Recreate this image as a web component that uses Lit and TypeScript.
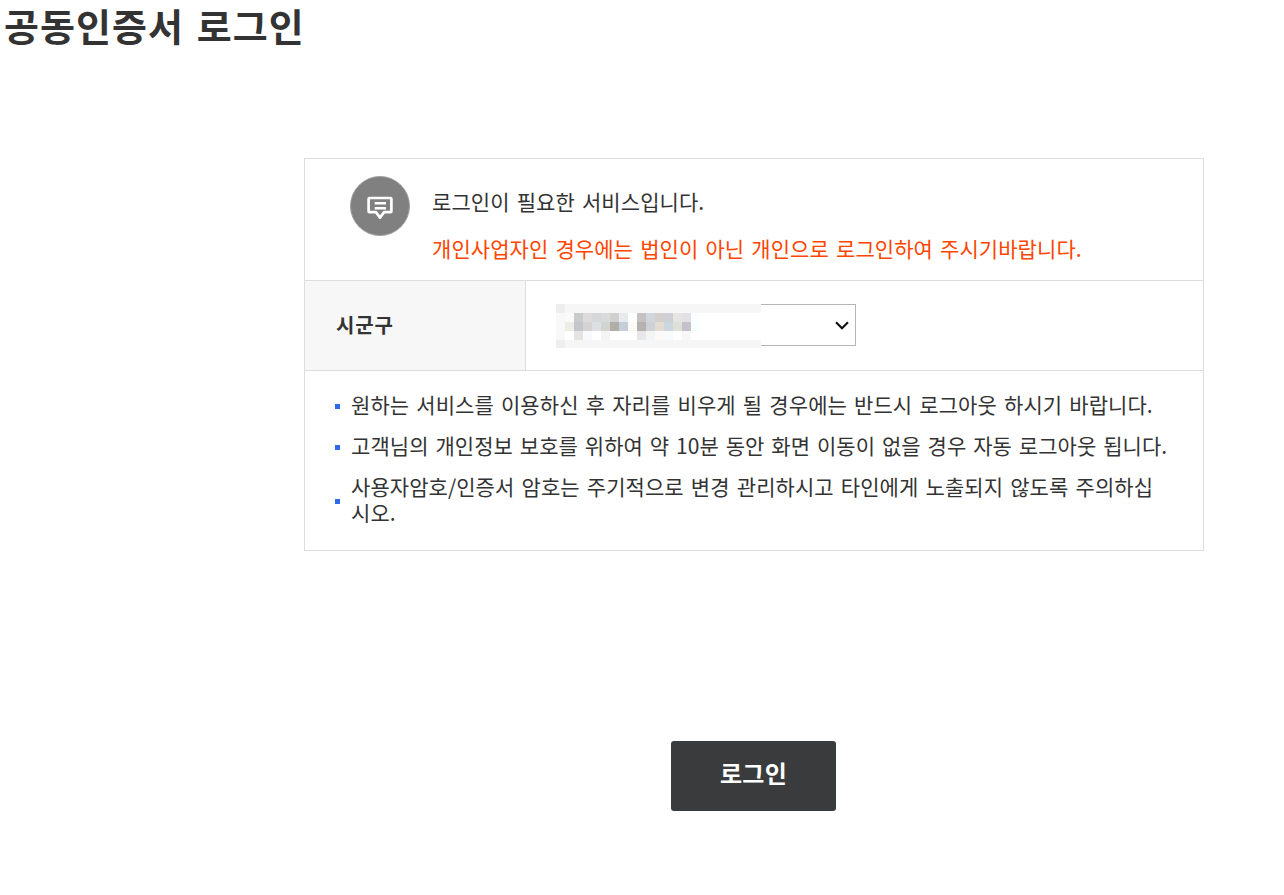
import { LitElement, html, css } from "lit";
import { customElement } from "lit/decorators.js";

const W = "#ffffff";
const top = "#f6f6f6";
const mosaic: string[][] = [
  ["#eeeeee", ...Array(22).fill(top)],
  ["#f8f8f8", "#fafafa", "#c9cbcb", "#dddbdb", "#d4d8d8", "#d9dbdb", "#d0d0d0", "#e8ebee", "#fefefe", "#c4c2c3", "#d2d5da", "#d2cfcd", "#cdd1d5", "#e5e6e3", "#e3e1e5", "#fbfefe", ...Array(7).fill(W)],
  ["#f8f8f8", "#eeece6", "#c3c6cb", "#d5d2d3", "#dde0e3", "#d3d3d0", "#b0ada6", "#c3ced6", "#fbfaf7", "#b5b3ae", "#cfd1d6", "#e2dcd2", "#cbd6de", "#e0e0da", "#c4c1cc", "#f8ffff", ...Array(7).fill(W)],
  ["#f8f8f8", W, "#e4e4e2", "#f7f9fb", W, "#f4f4f4", W, W, W, "#e8e6e9", "#f3f5f5", "#fcfaf8", "#f9fafc", W, "#f8f6f7", ...Array(8).fill(W)],
  ["#eeeeee", ...Array(22).fill(top)],
];

@customElement("app-root")
export class AppRoot extends LitElement {
  static styles = css`
    :host {
      display: block;
      font-family: "Noto Sans CJK KR", "Noto Sans", sans-serif;
      color: #333;
      background: #fff;
      min-height: 895px;
    }
    h1 {
      margin: 0;
      font-size: 38px;
      line-height: 50px;
      font-weight: 700;
      letter-spacing: 1.05px;
      word-spacing: 3px;
      padding-left: 4px;
      color: #333;
    }
    .wrap {
      margin: 108px 0 0 304px;
      width: 900px;
    }
    .box {
      border: 1px solid #ddd;
      box-sizing: border-box;
      width: 900px;
    }
    .head {
      display: flex;
      height: 122px;
      box-sizing: border-box;
      padding: 17px 0 0 45px;
      border-bottom: 1px solid #ddd;
    }
    .circle {
      width: 60px;
      height: 60px;
      flex: none;
    }
    .msgs {
      margin-left: 22px;
      font-size: 21px;
      letter-spacing: 0.06px;
      word-spacing: 2.4px;
      line-height: 30px;
      padding-top: 10px;
    }
    .msgs p { margin: 0; }
    .msgs .warn { color: #ff4500; margin-top: 17px; }
    .row {
      display: flex;
      height: 90px;
      border-bottom: 1px solid #ddd;
      box-sizing: border-box;
    }
    .label {
      width: 221px;
      box-sizing: border-box;
      background: #f7f7f7;
      border-right: 1px solid #ddd;
      padding: 0 0 2px 31px;
      font-size: 20px;
      letter-spacing: 0.9px;
      font-weight: 700;
      display: flex;
      align-items: center;
    }
    .field {
      padding: 23px 0 0 30px;
      position: relative;
    }
    select {
      display: block;
      appearance: none;
      width: 300px;
      height: 42px;
      box-sizing: border-box;
      border: 1px solid #b5b5b5;
      border-radius: 0;
      background: #fff;
      font-size: 18px;
    }
    .chev {
      position: absolute;
      left: 309px;
      top: 40px;
      width: 14px;
      height: 9px;
      pointer-events: none;
    }
    .mosaic {
      position: absolute;
      left: 30px;
      top: 23px;
      width: 205px;
      height: 44px;
      overflow: hidden;
      display: grid;
      grid-template-columns: repeat(23, 9px);
      grid-template-rows: repeat(5, 9px);
    }
    ul {
      list-style: none;
      margin: 0;
      padding: 20px 33px 25px 30px;
      font-size: 21px;
      letter-spacing: 0.06px;
      word-spacing: 2.4px;
      line-height: 26px;
    }
    li {
      display: flex;
      align-items: center;
      margin-top: 15px;
    }
    li:first-child { margin-top: 0; }
    li.tight { word-spacing: 2.1px; }
    .sq {
      flex: none;
      width: 5px;
      height: 5px;
      background: #2f6be8;
      margin: 4px 11px 0 0;
    }
    li span { word-break: break-all; }
    .actions {
      display: flex;
      justify-content: center;
      margin-top: 190px;
    }
    button {
      width: 165px;
      height: 70px;
      margin-right: 1px;
      border: none;
      border-radius: 3px;
      background: #3a3b3d;
      color: #fff;
      font-family: inherit;
      font-size: 24px;
      letter-spacing: 0.2px;
      font-weight: 700;
      padding: 0 0 7px;
    }
  `;

  render() {
    return html`
      <h1>공동인증서 로그인</h1>
      <div class="wrap">
        <div class="box">
          <div class="head">
            <svg class="circle" viewBox="0 0 60 60">
              <circle cx="30" cy="30" r="29.5" fill="#808080" stroke="#a0a0a0" stroke-width="1"/>
              <path d="M19.6 22h20.8a1 1 0 0 1 1 1v12.2a1 1 0 0 1-1 1h-6.4L30 41.6l-4-5.4h-6.4a1 1 0 0 1-1-1V23a1 1 0 0 1 1-1z" fill="none" stroke="#fff" stroke-width="2.7" stroke-linejoin="round"/>
              <path d="M24.7 27.2H36M24.7 32.2H36" stroke="#fff" stroke-width="2.6" fill="none"/>
            </svg>
            <div class="msgs">
              <p>로그인이 필요한 서비스입니다.</p>
              <p class="warn">개인사업자인 경우에는 법인이 아닌 개인으로 로그인하여 주시기바랍니다.</p>
            </div>
          </div>
          <div class="row">
            <div class="label">시군구</div>
            <div class="field">
              <select aria-label="시군구"><option></option></select>
              <div class="mosaic">
                ${mosaic.flat().map((c) => html`<i style="background:${c}"></i>`)}
              </div>
              <svg class="chev" viewBox="0 0 14 9">
                <path d="M1 1.2l6 6 6-6" fill="none" stroke="#111" stroke-width="2.1"/>
              </svg>
            </div>
          </div>
          <ul>
            <li><i class="sq"></i><span>원하는 서비스를 이용하신 후 자리를 비우게 될 경우에는 반드시 로그아웃 하시기 바랍니다.</span></li>
            <li class="tight"><i class="sq"></i><span>고객님의 개인정보 보호를 위하여 약 10분 동안 화면 이동이 없을 경우 자동 로그아웃 됩니다.</span></li>
            <li><i class="sq"></i><span>사용자암호/인증서 암호는 주기적으로 변경 관리하시고 타인에게 노출되지 않도록 주의하십시오.</span></li>
          </ul>
        </div>
        <div class="actions"><button>로그인</button></div>
      </div>
    `;
  }
}
